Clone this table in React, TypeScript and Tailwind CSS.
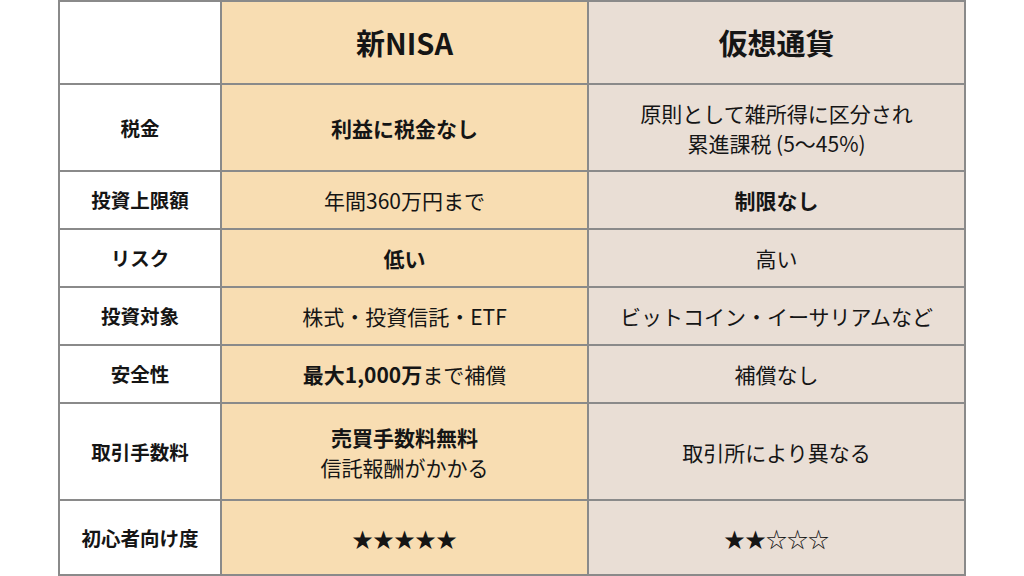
import React from "react";

const rows: { label: string; a: React.ReactNode; b: React.ReactNode; h: string }[] = [
  { label: "税金", a: <span className="font-bold">利益に税金なし</span>, b: <>原則として雑所得に区分され<br />累進課税 (5〜45%)</>, h: "h-[85px]" },
  { label: "投資上限額", a: "年間360万円まで", b: <span className="font-bold">制限なし</span>, h: "h-[56px]" },
  { label: "リスク", a: <span className="font-bold">低い</span>, b: "高い", h: "h-[56px]" },
  { label: "投資対象", a: "株式・投資信託・ETF", b: "ビットコイン・イーサリアムなど", h: "h-[56px]" },
  { label: "安全性", a: <><span className="font-bold">最大1,000万</span>まで補償</>, b: "補償なし", h: "h-[56px]" },
  { label: "取引手数料", a: <><span className="font-bold">売買手数料無料</span><br />信託報酬がかかる</>, b: "取引所により異なる", h: "h-[95px]" },
  { label: "初心者向け度", a: "★★★★★", b: "★★☆☆☆", h: "h-[73px]" },
];

export default function App() {
  return (
    <div className="w-[1024px] h-[576px] bg-white" style={{ fontFamily: '"Noto Sans CJK JP", "Noto Sans", sans-serif' }}>
      <div className="mx-auto w-[908px] bg-[#8a8a8a] p-[2px] grid grid-cols-[160px_365px_375px] gap-[2px] text-[#151515]">
        <div className="h-[81px] bg-white" />
        <div className="h-[81px] bg-[#f8ddb2] flex items-center justify-center text-[29px] font-bold">新NISA</div>
        <div className="h-[81px] bg-[#e9ded5] flex items-center justify-center text-[29px] font-bold">仮想通貨</div>
        {rows.map((r, i) => (
          <React.Fragment key={i}>
            <div className={`${r.h} bg-white flex items-center justify-center text-[19.5px] font-bold`}>
              <div>{r.label}</div>
            </div>
            <div className={`${r.h} bg-[#f8ddb2] flex items-center justify-center text-[21px] leading-[30px]`}>
              <div className="text-center">{r.a}</div>
            </div>
            <div className={`${r.h} bg-[#e9ded5] flex items-center justify-center text-[21px] leading-[30px]`}>
              <div className="text-center">{r.b}</div>
            </div>
          </React.Fragment>
        ))}
      </div>
    </div>
  );
}
